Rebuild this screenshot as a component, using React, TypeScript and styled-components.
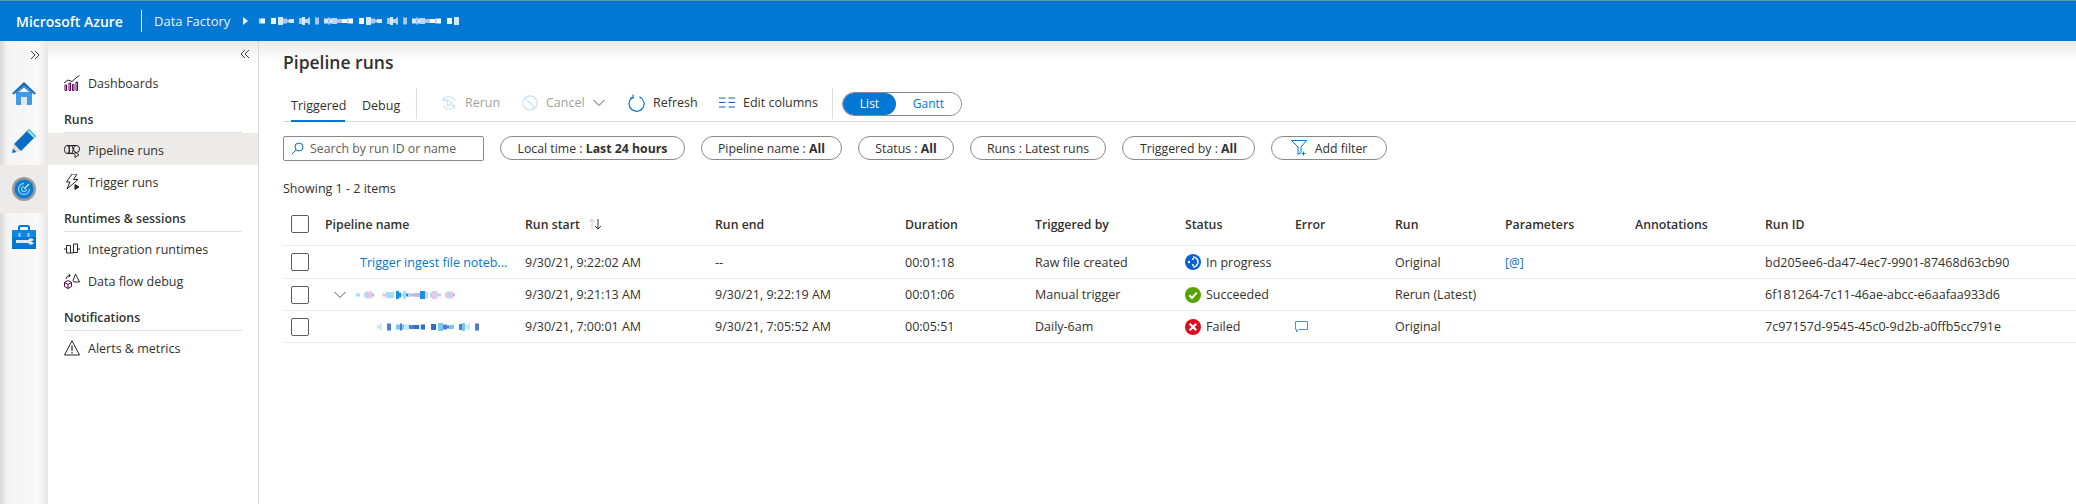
import styled, { createGlobalStyle } from 'styled-components'

const GlobalStyle = createGlobalStyle`
  html, body {
    margin: 0;
    padding: 0;
    background: #fff;
    font-family: 'Open Sans', 'Liberation Sans', sans-serif;
    font-size: 12.5px;
    color: #323130;
  }
`

const columns = ['Pipeline name', 'Run start', 'Run end', 'Duration', 'Triggered by', 'Status', 'Error', 'Run', 'Parameters', 'Annotations', 'Run ID']

const rows = [
  {
    start: '9/30/21, 9:22:02 AM',
    end: '--',
    duration: '00:01:18',
    trigger: 'Raw file created',
    status: 'progress',
    statusText: 'In progress',
    run: 'Original',
    runId: 'bd205ee6-da47-4ec7-9901-87468d63cb90',
  },
  {
    start: '9/30/21, 9:21:13 AM',
    end: '9/30/21, 9:22:19 AM',
    duration: '00:01:06',
    trigger: 'Manual trigger',
    status: 'ok',
    statusText: 'Succeeded',
    run: 'Rerun (Latest)',
    runId: '6f181264-7c11-46ae-abcc-e6aafaa933d6',
  },
  {
    start: '9/30/21, 7:00:01 AM',
    end: '9/30/21, 7:05:52 AM',
    duration: '00:05:51',
    trigger: 'Daily-6am',
    status: 'failed',
    statusText: 'Failed',
    run: 'Original',
    runId: '7c97157d-9545-45c0-9d2b-a0ffb5cc791e',
  },
]

// scrubbed names in the shot are just coloured pixel blocks
function Scrubbed({ width, colors, seed }: { width: number; colors: string[]; seed: number }) {
  const cells = []
  let x = 0
  let n = seed
  while (x < width) {
    n = (n * 37 + 11) % 101
    const w = 2 + (n % 4)
    const h = 3 + (n % 6)
    if (n % 5 !== 0) {
      cells.push(<rect key={x} x={x} y={(10 - h) / 2} width={w} height={h} fill={colors[n % colors.length]} />)
    }
    x += w
  }
  return (
    <svg width={width} height={10} viewBox={`0 0 ${width} 10`}>
      {cells}
    </svg>
  )
}

const Chevrons = ({ left }: { left?: boolean }) => (
  <svg width="10" height="10" viewBox="0 0 10 10" fill="none" stroke="#3b3a39" strokeWidth="1">
    <path d={left ? 'M5 1 1 5l4 4M9 1 5 5l4 4' : 'M1 1l4 4-4 4M5 1l4 4-4 4'} />
  </svg>
)

const HomeIcon = () => (
  <svg width="24" height="24" viewBox="0 0 24 24">
    <path d="M4 11h16v12a1 1 0 0 1-1 1H5a1 1 0 0 1-1-1z" fill="#3f9bea" />
    <path d="M12 1 0 12.5l1.5 1L12 4.5l10.500 9 1.500-1z" fill="#0f68b5" />
    <path d="M12 4.500 3 12.500h2L12 6.500l7 6h2z" fill="#2b88d8" />
    <rect x="9" y="16" width="6" height="8" fill="#e6e6e6" />
  </svg>
)

const PencilIcon = () => (
  <svg width="24" height="24" viewBox="0 0 24 24">
    <path d="M0 24 2 15l7 7z" fill="#e8d9c8" />
    <path d="M0 24 1 19.500l3.500 3.500z" fill="#0078d4" />
    <path d="M2 15 17 0l7 7L9 22z" fill="#0a6cc4" />
    <path d="M17 0l7 7-2 2-7-7z" fill="#50c8e8" />
    <path d="M15.500 2.800l1.200-1.200 6 6-1.200 1.200z" fill="#9fe4f5" />
  </svg>
)

const MonitorIcon = () => (
  <svg width="24" height="24" viewBox="0 0 24 24" fill="none">
    <circle cx="12" cy="12" r="12" fill="#9a9a9a" />
    <circle cx="12" cy="12" r="9.500" fill="#0f79cf" />
    <path d="M12 6.500a5.500 5.500 0 1 0 5.500 5.500" stroke="#7fd3f5" strokeWidth="1.300" />
    <path d="M12 9.500a2.500 2.500 0 1 0 2.500 2.500" stroke="#7fd3f5" strokeWidth="1.200" />
    <path d="M12 12l5-5" stroke="#bfeafa" strokeWidth="1.400" />
  </svg>
)

const ToolboxIcon = () => (
  <svg width="24" height="24" viewBox="0 0 24 24" fill="none">
    <path d="M7 6V2.500A1.500 1.500 0 0 1 8.500 1h7A1.500 1.500 0 0 1 17 2.500V6" stroke="#0078d4" strokeWidth="2" />
    <rect y="5" width="24" height="19" fill="#0078d4" />
    <rect y="5" width="24" height="7" fill="#1087e0" />
    <rect x="6.500" y="8" width="2" height="4" fill="#8fd4f5" />
    <rect x="15.500" y="8" width="2" height="4" fill="#8fd4f5" />
    <path d="M4 15h12a3.500 3.500 0 0 1 6 0l-3 1.500 3 1.500a3.500 3.500 0 0 1-6 0H4z" fill="#e6e6e6" />
  </svg>
)

const NavIcon = ({ name }: { name: string }) => {
  const ink = '#252423'
  const purple = '#5c005c'
  return (
    <svg width="16" height="16" viewBox="0 0 16 16" fill="none" stroke={ink} strokeWidth="1">
      {name === 'dash' && (
        <>
          <path d="M1 15.500V10h1.500v5.500zM5 15.500V8h1.500v7.500zM8.500 15.500V9.500H10v6zM12 15.500V7h1.500v8.500z" stroke={purple} />
          <path d="M0 8l4-3 4 1.500 4-3.500 3.500-2.500" />
        </>
      )}
      {name === 'pipe' && (
        <>
          <path d="M3 3.500H13M3 11.500h7" />
          <ellipse cx="3" cy="7.500" rx="2.500" ry="4" />
          <ellipse cx="7" cy="7.500" rx="2" ry="4" />
          <ellipse cx="12.500" cy="7" rx="3" ry="3.500" />
          <path d="M11 10v5.500l4-2.700z" fill="#fff" />
        </>
      )}
      {name === 'trigger' && (
        <>
          <path d="M8 0H13L9.500 5.500H14L3 15l3-7H2.500z" />
          <path d="M11 10.500v5l4-2.500z" fill={ink} />
        </>
      )}
      {name === 'runtime' && (
        <>
          <path d="M0 8h2.500M13.500 8H16" />
          <path d="M2.500 4.500h4V12h3V3h4v8.500h-4" />
          <path d="M2.500 4.500V12h4" />
        </>
      )}
      {name === 'flow' && (
        <>
          <path d="M3.500 9.500l3.500-2 3.500 2v4l-3.500 2-3.500-2zM3.500 9.500l3.500 2 3.500-2M7 11.500v4" stroke={purple} transform="translate(-3 0)" />
          <path d="M11.500 1 15.500 9H10l-1-1.500z" />
          <path d="M2 6a4 4 0 0 1 4-3.500M4.500 1l2 1.500-2 1.500" />
        </>
      )}
      {name === 'alert' && (
        <>
          <path d="M8 .8 15.500 15H.5z" />
          <path d="M8 5.500v5.500M8 12v1.500" strokeWidth="1.200" />
        </>
      )}
    </svg>
  )
}

const StatusIcon = ({ kind }: { kind: string }) => (
  <svg width="16" height="16" viewBox="0 0 16 16">
    {kind === 'progress' && (
      <>
        <circle cx="8" cy="8" r="8" fill="#0b5fd9" />
        <path d="M8 3a5 5 0 0 1 0 10" fill="none" stroke="#fff" strokeWidth="1.500" />
        <circle cx="4" cy="8" r="1.200" fill="#fff" />
        <circle cx="8" cy="5" r="1" fill="#fff" />
        <circle cx="8" cy="11" r="1" fill="#fff" />
      </>
    )}
    {kind === 'ok' && (
      <>
        <circle cx="8" cy="8" r="8" fill="#57a300" />
        <path d="M4.300 8.300 7 11l4.800-5.300" fill="none" stroke="#fff" strokeWidth="2" />
      </>
    )}
    {kind === 'failed' && (
      <>
        <circle cx="8" cy="8" r="8" fill="#e00b1c" />
        <path d="M4.700 4.700l6.600 6.600M11.300 4.700l-6.600 6.600" fill="none" stroke="#fff" strokeWidth="2.200" />
      </>
    )}
  </svg>
)

const RerunIcon = () => (
  <svg width="16" height="16" viewBox="0 0 20 20" fill="none" stroke="#c7e0f4" strokeWidth="1.400">
    <path d="M3 7a7.500 7.500 0 0 1 14 0M17 13a7.500 7.500 0 0 1-14 0" />
    <path d="M3 3v4h4M17 17v-4h-4" />
    <path d="M8 6v8l6-4z" />
  </svg>
)

const CancelIcon = () => (
  <svg width="16" height="16" viewBox="0 0 18 18" fill="none" stroke="#c7e0f4" strokeWidth="1.300">
    <circle cx="9" cy="9" r="8" />
    <path d="M3.500 3.500l11 11" />
  </svg>
)

const DownChevron = ({ color = '#605e5c' }: { color?: string }) => (
  <svg width="12" height="8" viewBox="0 0 12 8" fill="none" stroke={color} strokeWidth="1">
    <path d="M.5 1 6 6.500 11.500 1" />
  </svg>
)

const RefreshIcon = () => (
  <svg width="17" height="18" viewBox="0 0 17 18" fill="none" stroke="#0078d4" strokeWidth="1.200">
    <path d="M5 3.200A7.500 7.500 0 1 0 11.500 2.900" />
    <path d="M5 .6l.4 3.200-3.200.3" />
  </svg>
)

const ColumnsIcon = () => (
  <svg width="16" height="11" viewBox="0 0 16 11" fill="none" stroke="#0b5fc9" strokeWidth="1.100">
    <path d="M0 1h6.500M9.500 1H16M0 5.500h6.500M9.500 5.500H16M0 10h6.500M9.500 10H16" />
  </svg>
)

const SearchIcon = () => (
  <svg width="13" height="13" viewBox="0 0 13 13" fill="none" stroke="#0078d4" strokeWidth="1">
    <circle cx="8" cy="5" r="4" />
    <path d="M5 8 .8 12.200" />
  </svg>
)

const FunnelIcon = () => (
  <svg width="17" height="16" viewBox="0 0 17 16" fill="none" stroke="#0078d4" strokeWidth="1">
    <path d="M.5.500h15L10 7v5.500l-3 2V7z" />
    <path d="M12.500 11.500v4M10.500 13.500h4" />
  </svg>
)

const SortIcon = () => (
  <svg width="14" height="12" viewBox="0 0 14 12" fill="none" strokeWidth="1">
    <path d="M4 11V1M1 4l3-3 3 3" stroke="#c8c6c4" />
    <path d="M10 1v10M7 8l3 3 3-3" stroke="#323130" />
  </svg>
)

const CommentIcon = () => (
  <svg width="13" height="12" viewBox="0 0 13 12" fill="none" stroke="#4a8fe0" strokeWidth="1">
    <path d="M.5.500h12v8H4L1.500 11V8.500h-1z" />
  </svg>
)

function App() {
  return (
    <>
      <GlobalStyle />
      <Page>
        <Header>
          <Brand>Microsoft Azure</Brand>
          <HeaderDivider />
          <Crumb>Data Factory</Crumb>
          <CrumbArrow />
          <Scrubbed width={200} seed={7} colors={['#ffffff', '#d6e8fa', '#ffffff', '#b9d6f2', '#a9c4ee']} />
        </Header>
        <Body>
          <Rail>
            <RailToggle>
              <Chevrons />
            </RailToggle>
            <RailItem>
              <HomeIcon />
            </RailItem>
            <RailItem>
              <PencilIcon />
            </RailItem>
            <RailItem $active>
              <MonitorIcon />
            </RailItem>
            <RailItem>
              <ToolboxIcon />
            </RailItem>
          </Rail>
          <Nav>
            <NavToggle>
              <Chevrons left />
            </NavToggle>
            <NavItem>
              <NavIcon name="dash" />
              Dashboards
            </NavItem>
            <NavSection>Runs</NavSection>
            <NavItem $active>
              <NavIcon name="pipe" />
              Pipeline runs
            </NavItem>
            <NavItem>
              <NavIcon name="trigger" />
              Trigger runs
            </NavItem>
            <NavSection>Runtimes &amp; sessions</NavSection>
            <NavItem>
              <NavIcon name="runtime" />
              Integration runtimes
            </NavItem>
            <NavItem>
              <NavIcon name="flow" />
              Data flow debug
            </NavItem>
            <NavSection>Notifications</NavSection>
            <NavItem>
              <NavIcon name="alert" />
              Alerts &amp; metrics
            </NavItem>
          </Nav>
          <Main>
            <Title>Pipeline runs</Title>
            <Toolbar>
              <Tab $active $width={54}>
                Triggered
              </Tab>
              <Tab $width={45}>Debug</Tab>
              <ToolbarDivider />
              <Action $disabled $width={81}>
                <RerunIcon />
                Rerun
              </Action>
              <Action $disabled $width={106}>
                <CancelIcon />
                Cancel
                <DownChevron />
              </Action>
              <Action $width={91}>
                <RefreshIcon />
                Refresh
              </Action>
              <Action $width={113}>
                <ColumnsIcon />
                Edit columns
              </Action>
              <ToggleDivider />
              <Toggle>
                <ToggleOption $active>List</ToggleOption>
                <ToggleOption>Gantt</ToggleOption>
              </Toggle>
            </Toolbar>
            <Filters>
              <SearchBox>
                <SearchIcon />
                Search by run ID or name
              </SearchBox>
              <Pill $width={185}>
                <span>
                  Local time : <b>Last 24 hours</b>
                </span>
              </Pill>
              <Pill $width={141}>
                <span>
                  Pipeline name : <b>All</b>
                </span>
              </Pill>
              <Pill $width={96}>
                <span>
                  Status : <b>All</b>
                </span>
              </Pill>
              <Pill $width={136}>Runs : Latest runs</Pill>
              <Pill $width={133}>
                <span>
                  Triggered by : <b>All</b>
                </span>
              </Pill>
              <Pill $width={116}>
                <FunnelIcon />
                Add filter
              </Pill>
            </Filters>
            <Showing>Showing 1 - 2 items</Showing>
            <HeadRow>
              <Cell>
                <Checkbox />
              </Cell>
              {columns.map((c) => (
                <HeadCell key={c}>
                  {c}
                  {c === 'Run start' && <SortIcon />}
                </HeadCell>
              ))}
            </HeadRow>
            {rows.map((r, i) => (
              <Row key={r.runId} $first={i === 0}>
                <Cell>
                  <Checkbox />
                </Cell>
                {i === 0 && <NameCell $indent={35}>Trigger ingest file noteb...</NameCell>}
                {i === 1 && (
                  <NameCell $indent={9}>
                    <DownChevron />
                    <Scrubbed width={105} seed={23} colors={['#c6ecfb', '#c9b3e0', '#1a8fe3', '#e3c8e8', '#a8dcf7']} />
                  </NameCell>
                )}
                {i === 2 && (
                  <NameCell $indent={52}>
                    <Scrubbed width={103} seed={41} colors={['#1a8fe3', '#7cc4f2', '#2a6fd0', '#c6ecfb', '#4b7fd6']} />
                  </NameCell>
                )}
                <Cell>{r.start}</Cell>
                <Cell>{r.end}</Cell>
                <Cell>{r.duration}</Cell>
                <Cell>{r.trigger}</Cell>
                <StatusCell>
                  <StatusIcon kind={r.status} />
                  {r.statusText}
                </StatusCell>
                <Cell>{r.status === 'failed' && <CommentIcon />}</Cell>
                <Cell>{r.run}</Cell>
                <Cell>{i === 0 && <ParamLink>[@]</ParamLink>}</Cell>
                <Cell />
                <Cell>{r.runId}</Cell>
              </Row>
            ))}
          </Main>
        </Body>
      </Page>
    </>
  )
}

const Page = styled.div`
  display: flex;
  flex-direction: column;
  height: 504px;
  overflow: hidden;
`

const Header = styled.header`
  display: flex;
  align-items: center;
  flex: none;
  height: 40px;
  padding-left: 16px;
  background: #0078d4;
  border-top: 1px solid #5f9a9f;
  color: #fff;
`

const Brand = styled.span`
  font-size: 14px;
  font-weight: 600;
  width: 125px;
`

const HeaderDivider = styled.span`
  width: 1px;
  height: 22px;
  background: #fff;
  margin-right: 12px;
`

const Crumb = styled.span`
  font-size: 13px;
  width: 89px;
  color: #e8f3fc;
  white-space: nowrap;
`

const CrumbArrow = styled.span`
  width: 0;
  height: 0;
  border-left: 5px solid #fff;
  border-top: 4px solid transparent;
  border-bottom: 4px solid transparent;
  margin-right: 11px;
`

const Body = styled.div`
  display: flex;
  flex: 1;
`

const Rail = styled.aside`
  flex: none;
  width: 48px;
  background: linear-gradient(90deg, #d8d8d8 0, #f4f4f4 16%, #f9f9f9 80%, #e6e6e6 100%);
`

const RailToggle = styled.div`
  display: flex;
  justify-content: flex-end;
  align-items: center;
  height: 28px;
  padding: 0 8px 0 0;
`

const RailItem = styled.div<{ $active?: boolean }>`
  display: flex;
  align-items: center;
  justify-content: center;
  height: 48px;
  background: ${(p) => (p.$active ? '#edebe9' : 'transparent')};
`

const Nav = styled.nav`
  flex: none;
  width: 210px;
  border-right: 1px solid #d8d8d8;
  background: linear-gradient(180deg, #e9e9e9 0, #fff 20px);
`

const NavToggle = styled.div`
  display: flex;
  justify-content: flex-end;
  align-items: center;
  height: 25px;
  padding-right: 8px;
`

const NavItem = styled.div<{ $active?: boolean }>`
  display: flex;
  align-items: center;
  gap: 8px;
  height: 32px;
  box-sizing: border-box;
  padding: 2px 0 0 16px;
  background: ${(p) => (p.$active ? '#edebe9' : 'transparent')};
`

const NavSection = styled.div`
  display: flex;
  align-items: flex-end;
  height: 35px;
  box-sizing: border-box;
  margin: 0 16px;
  padding-bottom: 4px;
  font-weight: 600;
  font-size: 12.3px;
  border-bottom: 1px solid #e1dfdd;
`

const Main = styled.main`
  flex: 1;
  min-width: 0;
  padding-left: 24px;
  background: linear-gradient(180deg, #e9e9e9 0, #fff 20px);
`

const Title = styled.h1`
  margin: 0;
  height: 45px;
  box-sizing: border-box;
  padding-top: 7px;
  font-size: 17.5px;
  line-height: 28px;
  font-weight: 600;
`

const Toolbar = styled.div`
  display: flex;
  align-items: center;
  height: 35px;
  border-bottom: 1px solid #dadada;
`

const Tab = styled.div<{ $active?: boolean; $width: number }>`
  display: flex;
  align-items: center;
  align-self: stretch;
  flex: none;
  width: ${(p) => p.$width}px;
  box-sizing: border-box;
  margin-left: 8px;
  margin-right: 9px;
  padding-top: 4px;
  border-bottom: 2px solid ${(p) => (p.$active ? '#0078d4' : 'transparent')};
  margin-bottom: -1px;
`

const ToolbarDivider = styled.span`
  flex: none;
  width: 1px;
  height: 31px;
  margin: 0 24px 0 0;
  background: #dcdcdc;
`

const ToggleDivider = styled(ToolbarDivider)`
  margin: 0 9px 0 0;
`

const Action = styled.div<{ $disabled?: boolean; $width: number }>`
  display: flex;
  align-items: center;
  gap: 8px;
  flex: none;
  width: ${(p) => p.$width}px;
  padding-bottom: 2px;
  box-sizing: border-box;
  white-space: nowrap;
  color: ${(p) => (p.$disabled ? '#a19f9d' : '#323130')};
`

const Toggle = styled.div`
  display: flex;
  flex: none;
  width: 120px;
  height: 24px;
  box-sizing: border-box;
  border: 1px solid #8a8886;
  border-radius: 12px;
  overflow: hidden;
`

const ToggleOption = styled.div<{ $active?: boolean }>`
  display: flex;
  align-items: center;
  justify-content: center;
  flex: ${(p) => (p.$active ? '0 0 53px' : '1')};
  font-size: 12px;
  color: ${(p) => (p.$active ? '#fff' : '#0078d4')};
  background: ${(p) => (p.$active ? '#0078d4' : '#fff')};
  border-radius: 12px;
`

const Filters = styled.div`
  display: flex;
  align-items: flex-start;
  gap: 16px;
  padding-top: 14px;
  height: 25px;
`

const SearchBox = styled.div`
  display: flex;
  align-items: center;
  gap: 6px;
  width: 201px;
  height: 25px;
  box-sizing: border-box;
  padding-left: 7px;
  border: 1px solid #8a8886;
  border-radius: 2px;
  color: #605e5c;
  font-size: 12.3px;
`

const Pill = styled.div<{ $width: number }>`
  display: flex;
  align-items: center;
  justify-content: center;
  gap: 7px;
  width: ${(p) => p.$width}px;
  height: 24px;
  box-sizing: border-box;
  border: 1px solid #8a8886;
  border-radius: 12px;
  font-size: 12.3px;

  b {
    font-weight: 700;
  }
`

const Showing = styled.div`
  height: 42px;
  padding-top: 19px;
  box-sizing: border-box;
  line-height: 18px;
`

const gridColumns = '34px 200px 190px 190px 130px 150px 110px 100px 110px 130px 130px 1fr'

const HeadRow = styled.div`
  display: grid;
  grid-template-columns: ${gridColumns};
  align-items: center;
  height: 42px;
  border-bottom: 1px solid #edebe9;
  font-weight: 600;
  font-size: 12.3px;
`

const Row = styled.div<{ $first?: boolean }>`
  display: grid;
  grid-template-columns: ${gridColumns};
  align-items: center;
  height: ${(p) => (p.$first ? 32 : 31)}px;
  border-bottom: 1px solid #edebe9;
`

const Cell = styled.div`
  display: flex;
  align-items: center;
  padding-left: 8px;
  white-space: nowrap;
`

const HeadCell = styled(Cell)`
  gap: 8px;
`

const NameCell = styled(Cell)<{ $indent: number }>`
  gap: 10px;
  padding-left: ${(p) => p.$indent + 8}px;
  color: #0078d4;
`

const StatusCell = styled(Cell)`
  gap: 5px;
`

const ParamLink = styled.span`
  font-size: 12px;
  color: #0b6acb;
`

const Checkbox = styled.span`
  display: block;
  width: 18px;
  height: 18px;
  box-sizing: border-box;
  border: 1px solid #605e5c;
  border-radius: 2px;
`

export default App
